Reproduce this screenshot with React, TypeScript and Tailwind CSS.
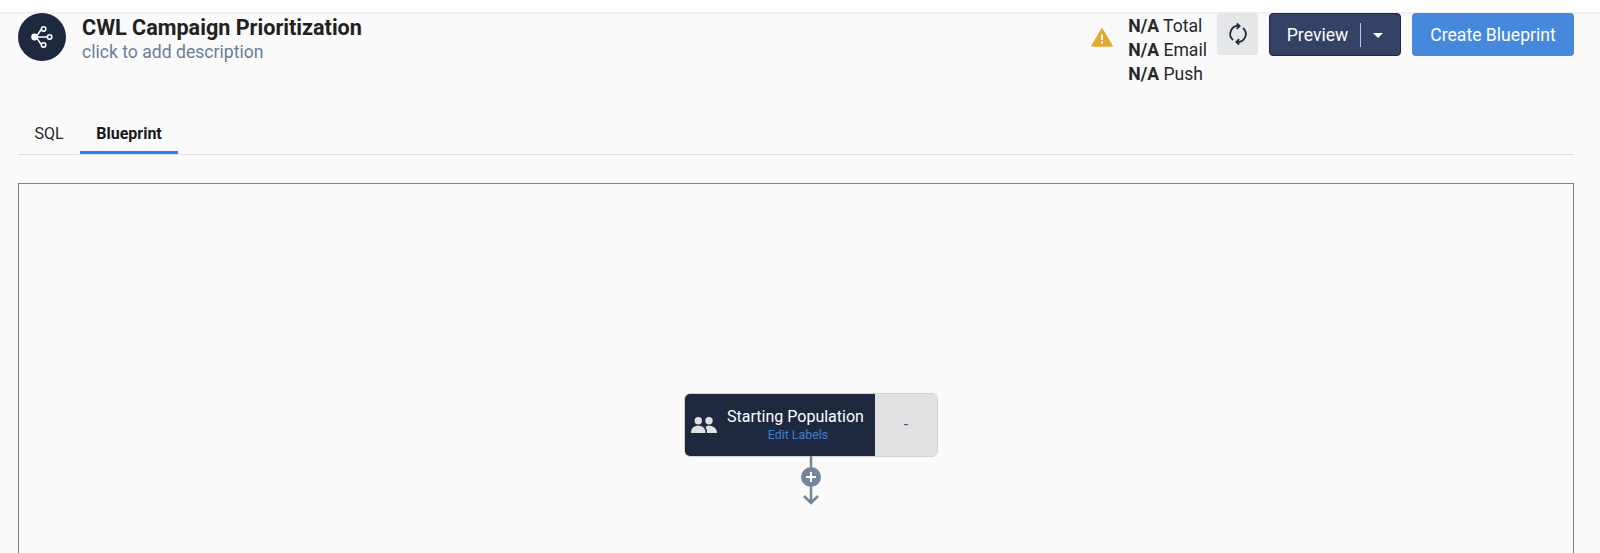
import React from "react";

function ShareGlyph() {
  return (
    <svg width="22" height="24" viewBox="0 0 22 24" fill="none" stroke="white" strokeWidth="1.6">
      <path d="M3 12C8 12 8 4 12 4M3 12H18M3 12C8 12 8 20 12 20" />
      <circle cx="3.6" cy="12" r="2.6" fill="white" />
      <circle cx="12.6" cy="4" r="2.2" fill="#1e293f" />
      <circle cx="18.6" cy="12" r="2.2" fill="#1e293f" />
      <circle cx="12.6" cy="20" r="2.2" fill="#1e293f" />
    </svg>
  );
}

function SyncGlyph() {
  return (
    <svg width="24" height="24" viewBox="0 0 24 24" fill="none" stroke="#1e293f" strokeWidth="1.8">
      <path d="M7 18A8 8 0 0 1 13 4" />
      <path d="M10.8 1.5L13.6 4L10.8 6.8" />
      <path d="M17 6A8 8 0 0 1 11 20" />
      <path d="M13.2 17.2L10.4 20L13.2 22.5" />
    </svg>
  );
}

function WarningGlyph() {
  return (
    <svg width="22" height="19" viewBox="0 0 22 19" className="mt-[15px]">
      <path d="M11 1L21 18H1Z" fill="#e3a935" stroke="#e3a935" strokeWidth="1.5" strokeLinejoin="round" />
      <path d="M11 6.5V12M11 13.5V15.5" stroke="white" strokeWidth="2" />
    </svg>
  );
}

function PeopleGlyph() {
  return (
    <svg width="26" height="16" viewBox="0 0 26 16" fill="#e0e1e3">
      <circle cx="7.3" cy="3.8" r="3.7" />
      <circle cx="18" cy="3.8" r="3.7" />
      <path d="M0 16C0 11 3 8.8 7.3 8.8C11.5 8.8 14.5 11 14.5 16Z" />
      <path d="M16 16C16 13 15.5 11.5 14.5 10C15.5 9.2 17 8.8 18 8.8C22 8.8 26 11 26 16Z" />
    </svg>
  );
}

function Stat({ label }: { label: string }) {
  return (
    <div className="h-6 leading-6 text-[17.6px] text-[#27272a] whitespace-nowrap">
      <span className="font-bold">N/A</span> {label}
    </div>
  );
}

export default function App() {
  return (
    <div className="h-[553px] overflow-hidden bg-[#fafafa] font-['Roboto',sans-serif]">
      <div className="h-3 bg-white shadow-[0_1px_3px_rgba(0,0,0,0.08)]" />
      <div className="flex h-[110px] pl-[18px] pr-[26px] pt-px">
        <div className="flex h-12 w-12 items-center justify-center rounded-full bg-[#1e293f]">
          <ShareGlyph />
        </div>
        <div className="ml-4 pt-[1px]">
          <div className="text-[21.6px] leading-[27px] font-bold text-[#212121]">CWL Campaign Prioritization</div>
          <div className="text-[17.6px] leading-[22px] text-[#6b7f96]">click to add description</div>
        </div>
        <div className="ml-auto flex items-start">
          <WarningGlyph />
          <div className="ml-[15px] mr-[10px] mt-[1px]">
            <Stat label="Total" />
            <Stat label="Email" />
            <Stat label="Push" />
          </div>
          <button className="flex h-[42px] w-[41px] items-center justify-center rounded bg-[#e5e6e8]">
            <SyncGlyph />
          </button>
          <button className="ml-[11px] flex h-[43px] w-[132px] items-center justify-center rounded border border-[#1e293f] bg-[#334265] pt-px text-[17.6px] text-white">
            Preview
            <span className="mx-3 h-6 w-px bg-white/70" />
            <span className="h-0 w-0 border-x-[5px] border-t-[5px] border-x-transparent border-t-white" />
          </button>
          <button className="ml-[11px] h-[43px] w-[162px] rounded bg-[#4688db] pt-px text-[17.6px] text-white">
            Create Blueprint
          </button>
        </div>
      </div>
      <div className="mx-[18px] mr-[26px] flex h-[33px] border-b border-[#dedfe1] text-[16px] leading-6">
        <div className="flex w-[62px] justify-center text-[#27272a]">SQL</div>
        <div className="flex w-[98px] justify-center border-b-[3px] border-[#2f80ed] font-bold text-[#18181b]">Blueprint</div>
      </div>
      <div className="relative mx-[18px] mr-[26px] mt-[28px] h-[500px] border border-[#808285]">
        <div className="absolute left-[665px] top-[209px] flex h-[64px] w-[254px] overflow-hidden rounded-md border border-[#cfd1d3]">
          <div className="flex w-[190px] items-center bg-[#1e293f] pl-[6px]">
            <PeopleGlyph />
            <div className="ml-[7px] flex-1 pr-2 text-center">
              <div className="text-[16px] leading-5 text-white whitespace-nowrap">Starting Population</div>
              <div className="pl-[5px] text-[12.4px] leading-4 text-[#3f7fd0]">Edit Labels</div>
            </div>
          </div>
          <div className="flex flex-1 items-center justify-center bg-[#e0e1e3] text-[16px] text-[#4b5563]">-</div>
        </div>
        <svg className="absolute left-[780px] top-[272px]" width="24" height="50" viewBox="0 0 24 50" fill="none">
          <path d="M12 0V47M5 40l7 7 7-7" stroke="#74869b" strokeWidth="2.5" />
          <circle cx="12" cy="21" r="10" fill="#74869b" />
          <path d="M7 21h10M12 16v10" stroke="white" strokeWidth="2" />
        </svg>
      </div>
    </div>
  );
}
